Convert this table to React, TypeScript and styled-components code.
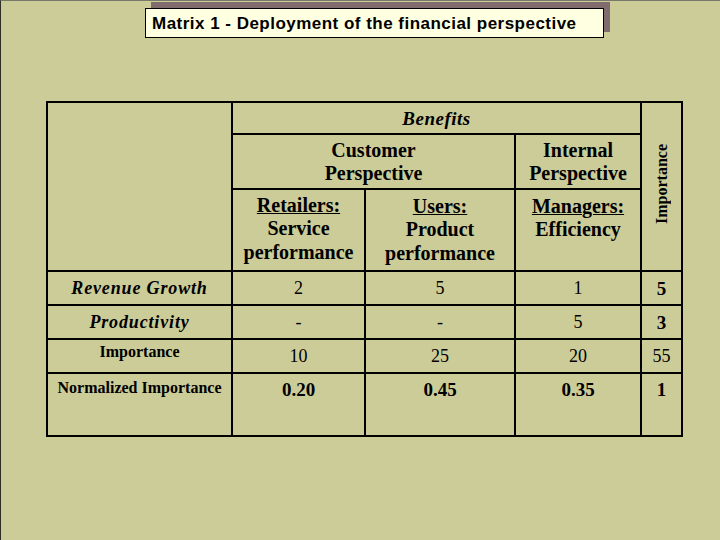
import React from 'react';
import styled, { createGlobalStyle } from 'styled-components';

const Global = createGlobalStyle`
  html, body { margin: 0; padding: 0; background: #cccc99; }
  #root { width: 720px; height: 540px; }
`;

const Slide = styled.div`
  box-sizing: border-box;
  width: 720px;
  height: 540px;
  background: #cccc99;
  border-left: 1px solid #2e2e26;
  border-top: 1px solid #77776a;
  display: flex;
  flex-direction: column;
  align-items: flex-start;
  overflow: hidden;
`;

const TitleBox = styled.h1`
  box-sizing: border-box;
  margin: 7px 0 0 144px;
  width: 459px;
  height: 30px;
  padding: 5px 0 0 6px;
  background: #ffffe1;
  border: 1px solid #000;
  box-shadow: 6px -6px 0 #806b6e;
  font: bold 17px/19px "Liberation Sans", Arial, sans-serif;
  letter-spacing: 0.48px;
  color: #000;
  white-space: nowrap;
`;

const Matrix = styled.div`
  margin: 63px 0 0 45px;
  display: grid;
  grid-template-columns: 183px 131px 148px 124px 39px;
  grid-template-rows: 30px 53px 80px 32px 32px 32px 61px;
  gap: 2px;
  padding: 2px;
  background: #000;
  font-family: "Liberation Serif", "Times New Roman", serif;
  color: #000;
`;

type Span = { $col?: string; $row?: string };

const Cell = styled.div<Span & { $top?: number }>`
  background: #cccc99;
  grid-column: ${p => p.$col ?? 'auto'};
  grid-row: ${p => p.$row ?? 'auto'};
  display: flex;
  flex-direction: column;
  align-items: center;
  justify-content: ${p => (p.$top === undefined ? 'center' : 'flex-start')};
  padding-top: ${p => p.$top ?? 0}px;
  box-sizing: border-box;
  text-align: center;
  min-width: 0;
`;

const BenefitsTitle = styled.span`
  font-size: 19px;
  font-weight: bold;
  font-style: italic;
  letter-spacing: 0.5px;
  line-height: 21px;
`;

const HeadText = styled.div`
  font-size: 20px;
  font-weight: bold;
  line-height: 23.4px;
  white-space: nowrap;
`;

const Under = styled.span`
  text-decoration: underline;
  text-decoration-thickness: 1px;
`;

const VerticalLabel = styled.span`
  writing-mode: vertical-rl;
  transform: rotate(180deg);
  font-size: 16px;
  font-weight: bold;
  line-height: 18px;
  margin-bottom: 6px;
`;

const MetricLabel = styled.span`
  font-size: 18px;
  font-weight: bold;
  font-style: italic;
  letter-spacing: 0.85px;
  line-height: 21px;
  white-space: nowrap;
`;

const SummaryLabel = styled.span`
  font-size: 16px;
  font-weight: bold;
  line-height: 18px;
  white-space: nowrap;
`;

const Value = styled.span<{ $bold?: boolean }>`
  font-size: ${p => (p.$bold ? 19 : 18)}px;
  font-weight: ${p => (p.$bold ? 'bold' : 'normal')};
  line-height: 21px;
`;

type Row = {
  label: string;
  kind: 'metric' | 'summary';
  labelTop?: number;
  valueTop?: number;
  values: { v: string; bold?: boolean }[];
};

const rows: Row[] = [
  {
    label: 'Revenue Growth',
    kind: 'metric',
    values: [{ v: '2' }, { v: '5' }, { v: '1' }, { v: '5', bold: true }],
  },
  {
    label: 'Productivity',
    kind: 'metric',
    values: [{ v: '-' }, { v: '-' }, { v: '5' }, { v: '3', bold: true }],
  },
  {
    label: 'Importance',
    kind: 'summary',
    labelTop: 3,
    values: [{ v: '10' }, { v: '25' }, { v: '20' }, { v: '55' }],
  },
  {
    label: 'Normalized Importance',
    kind: 'summary',
    labelTop: 5,
    valueTop: 5,
    values: [
      { v: '0.20', bold: true },
      { v: '0.45', bold: true },
      { v: '0.35', bold: true },
      { v: '1', bold: true },
    ],
  },
];

export default function App() {
  return (
    <>
      <Global />
      <Slide>
        <TitleBox>Matrix 1 - Deployment of the financial perspective</TitleBox>
        <Matrix>
          <Cell $col="1" $row="1 / span 3" />
          <Cell $col="2 / span 3" $row="1" $top={5}>
            <BenefitsTitle>Benefits</BenefitsTitle>
          </Cell>
          <Cell $col="5" $row="1 / span 3">
            <VerticalLabel>Importance</VerticalLabel>
          </Cell>

          <Cell $col="2 / span 2" $row="2" $top={4}>
            <HeadText>Customer</HeadText>
            <HeadText>Perspective</HeadText>
          </Cell>
          <Cell $col="4" $row="2" $top={4}>
            <HeadText>Internal</HeadText>
            <HeadText>Perspective</HeadText>
          </Cell>

          <Cell $col="2" $row="3" $top={4}>
            <HeadText><Under>Retailers:</Under></HeadText>
            <HeadText>Service</HeadText>
            <HeadText>performance</HeadText>
          </Cell>
          <Cell $col="3" $row="3" $top={5}>
            <HeadText><Under>Users:</Under></HeadText>
            <HeadText>Product</HeadText>
            <HeadText>performance</HeadText>
          </Cell>
          <Cell $col="4" $row="3" $top={5}>
            <HeadText><Under>Managers:</Under></HeadText>
            <HeadText>Efficiency</HeadText>
          </Cell>

          {rows.map(r => (
            <React.Fragment key={r.label}>
              <Cell $top={r.labelTop}>
                {r.kind === 'metric' ? (
                  <MetricLabel>{r.label}</MetricLabel>
                ) : (
                  <SummaryLabel>{r.label}</SummaryLabel>
                )}
              </Cell>
              {r.values.map((val, i) => (
                <Cell key={i} $top={r.valueTop}>
                  <Value $bold={val.bold}>{val.v}</Value>
                </Cell>
              ))}
            </React.Fragment>
          ))}
        </Matrix>
      </Slide>
    </>
  );
}
